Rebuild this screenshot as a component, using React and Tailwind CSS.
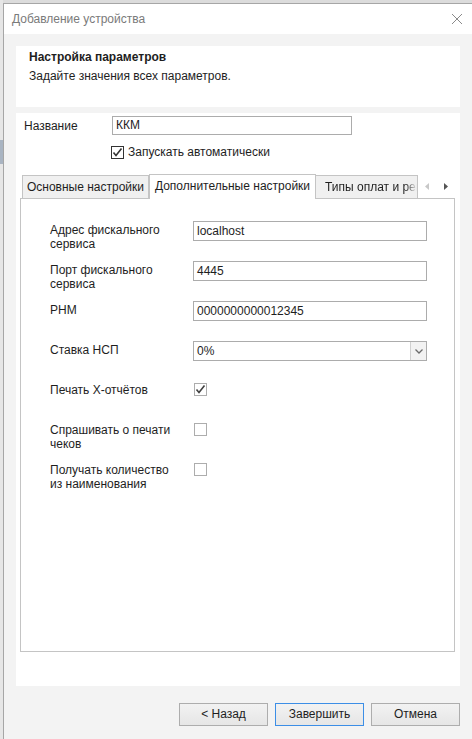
import React from 'react';

const font = { fontFamily: '"Liberation Sans", Arial, sans-serif' };

const Check = ({ checked }) => (
  <span className="w-[13px] h-[13px] border border-[#333333] bg-white flex items-center justify-center shrink-0">
    {checked && (
      <svg width="11" height="11" viewBox="0 0 11 11">
        <path d="M1.5 5.5 L4 8.5 L9.5 1.5" fill="none" stroke="#333333" strokeWidth="1.6" />
      </svg>
    )}
  </span>
);

const Box = ({ checked }) => (
  <span className="w-[13px] h-[13px] border border-[#adadad] bg-white flex items-center justify-center shrink-0">
    {checked && (
      <svg width="11" height="11" viewBox="0 0 11 11">
        <path d="M1.5 5.5 L4 8.5 L9.5 1.5" fill="none" stroke="#404040" strokeWidth="1.6" />
      </svg>
    )}
  </span>
);

const Field = ({ label, children }) => (
  <div className="flex items-start h-[40px]">
    <div className="w-[172px] pl-[29px] leading-[14px] pt-[2px] whitespace-nowrap">{label}</div>
    {children}
  </div>
);

const Input = ({ value }) => (
  <div className="w-[234px] h-[20px] border border-[#acacac] bg-white px-[3px] leading-[18px]">{value}</div>
);

const Btn = ({ children, primary }) => (
  <button
    className={`w-[89px] h-[23px] border ${primary ? 'border-[#3c8ee6]' : 'border-[#adadad]'} bg-gradient-to-b from-[#f2f2f2] to-[#e6e6e6] text-[12px] text-[#1e1e1e] leading-[21px]`}
  >
    {children}
  </button>
);

export default function App() {
  return (
    <div style={font} className="w-[472px] h-[739px] bg-[#dcdcdc] flex text-[12px] text-[#1e1e1e] overflow-hidden">
      {/* obscured app window behind the dialog */}
      <div className="w-[3px] flex flex-col">
        <div className="h-[140px] bg-[#e6e6e6]" />
        <div className="h-[24px] bg-[#a9b4c2]" />
        <div className="flex-1 bg-[#e6e6e6]" />
      </div>
      <div className="flex-1 flex flex-col mt-[3px] border-l border-t border-[#a6a6a6] bg-[#f3f3f3]">
        {/* title bar */}
        <div className="h-[30px] bg-white flex items-center justify-between pl-[8px] pr-[9px]">
          <span className="text-[12px] text-[#7a7a7a]">Добавление устройства</span>
          <svg width="12" height="12" viewBox="0 0 12 12">
            <path d="M1 1 L11 11 M11 1 L1 11" stroke="#8a8a8a" strokeWidth="1" />
          </svg>
        </div>

        <div className="flex-1 flex flex-col px-[12px] pt-[12px]">
          {/* wizard step header */}
          <div className="h-[61px] bg-white pl-[13px] pt-[2px]">
            <div className="font-bold leading-[18px]">Настройка параметров</div>
            <div className="leading-[18px] mt-[1px]">Задайте значения всех параметров.</div>
          </div>

          {/* main settings panel */}
          <div className="h-[573px] mt-[6px] bg-white flex flex-col pt-[3px] pl-[4px] pr-[5px]">
            <div className="flex items-center h-[19px]">
              <div className="w-[92px] pl-[4px]">Название</div>
              <div className="w-[240px] h-[19px] border border-[#acacac] px-[3px] leading-[17px]">ККМ</div>
            </div>
            <div className="flex items-center gap-[4px] ml-[91px] mt-[9px] h-[16px]">
              <Check checked />
              <span>Запускать автоматически</span>
            </div>

            {/* tabs */}
            <div className="flex items-end mt-[13px] h-[25px] whitespace-nowrap">
              <div className="w-[127px] h-[23px] ml-[2px] bg-[#f0f0f0] border border-b-0 border-[#c4c4c4] leading-[22px] text-center">
                Основные настройки
              </div>
              <div className="w-[167px] h-[25px] bg-white border border-b-0 border-[#c4c4c4] leading-[23px] text-center relative z-10 -mb-px">
                Дополнительные настройки
              </div>
              <div className="w-[102px] h-[23px] bg-[#f0f0f0] border border-b-0 border-l-0 border-[#c4c4c4] overflow-hidden">
                <div className="pl-[9px] leading-[22px] overflow-hidden [mask-image:linear-gradient(to_right,#000_88%,transparent)]">
                  Типы оплат и регистров
                </div>
              </div>
              <div className="flex items-center gap-[15px] pl-[7px] h-[23px]">
                <svg width="4" height="7" viewBox="0 0 4 7"><path d="M4 0 L0 3.5 L4 7 Z" fill="#c8c8c8" /></svg>
                <svg width="4" height="7" viewBox="0 0 4 7"><path d="M0 0 L4 3.5 L0 7 Z" fill="#555555" /></svg>
              </div>
            </div>

            <div className="h-[454px] border border-[#c4c4c4] flex flex-col pt-[22px]">
              <Field label={<>Адрес фискального<br />сервиса</>}>
                <Input value="localhost" />
              </Field>
              <Field label={<>Порт фискального<br />сервиса</>}>
                <Input value="4445" />
              </Field>
              <Field label="РНМ">
                <Input value="0000000000012345" />
              </Field>
              <Field label="Ставка НСП">
                <div className="w-[234px] h-[20px] border border-[#acacac] bg-white flex">
                  <div className="flex-1 px-[3px] leading-[18px]">0%</div>
                  <div className="w-[16px] border-l border-[#d0d0d0] bg-[#f2f2f2] flex items-center justify-center">
                    <svg width="8" height="5" viewBox="0 0 8 5">
                      <path d="M0.5 0.5 L4 4 L7.5 0.5" fill="none" stroke="#6b6b6b" strokeWidth="1.3" />
                    </svg>
                  </div>
                </div>
              </Field>
              <Field label="Печать Х-отчётов">
                <div className="pl-[1px] pt-[2px]"><Box checked /></div>
              </Field>
              <Field label={<>Спрашивать о печати<br />чеков</>}>
                <div className="pl-[1px] pt-[2px]"><Box /></div>
              </Field>
              <Field label={<>Получать количество<br />из наименования</>}>
                <div className="pl-[1px] pt-[2px]"><Box /></div>
              </Field>
            </div>
          </div>

          {/* wizard buttons */}
          <div className="flex justify-end gap-[7px] mt-[17px]">
            <Btn>&lt; Назад</Btn>
            <Btn primary>Завершить</Btn>
            <Btn>Отмена</Btn>
          </div>
        </div>
      </div>
    </div>
  );
}
